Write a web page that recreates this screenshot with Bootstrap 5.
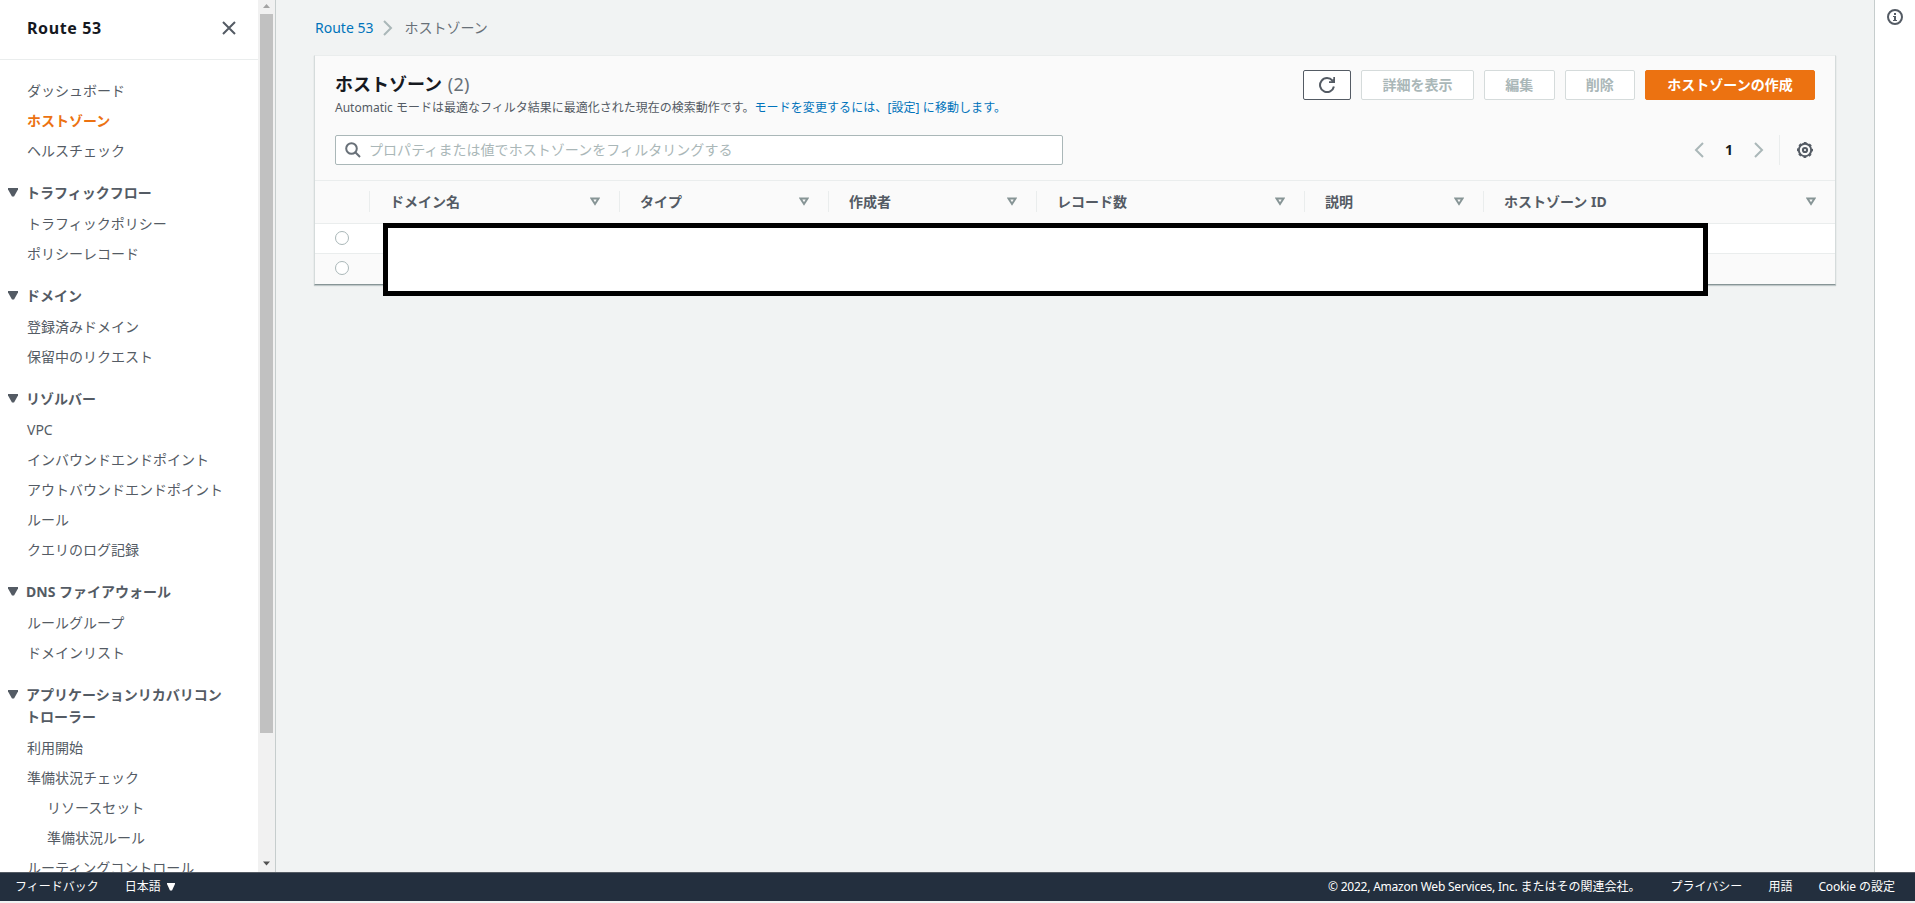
<!DOCTYPE html>
<html lang="ja">
<head>
<meta charset="utf-8">
<title>Route 53</title>
<link href="https://cdn.jsdelivr.net/npm/bootstrap@5.3.0/dist/css/bootstrap.min.css" rel="stylesheet">
<style>
body{font-family:"Noto Sans","Noto Sans CJK JP",sans-serif;font-size:14px;line-height:22px;color:#545b64;background:#f1f3f3;overflow:hidden}
a{text-decoration:none;color:#0073bb}
svg{display:block;flex:none}
.app-body{height:872px}
.side-panel{width:276px;border-right:1px solid #c6cdcd}
.side-head{height:60px;border-bottom:1px solid #eaeded;padding:0 21px 4px 27px}
.side-title{font-size:16px;font-weight:700;color:#16191f;margin:2px 0 0;letter-spacing:.6px}
.side-links{padding-top:16px}
.side-links a{display:block;height:30px;line-height:30px;padding-left:27px;color:#545b64;white-space:nowrap}
.side-links a.current{color:#ec7211;font-weight:700}
.side-links a.sub-link{padding-left:47px}
.side-group{padding:16px 20px 5px 8px;font-weight:700;line-height:22px}
.side-group svg{margin:6px 8px 0 0}
.scroll-rail{width:17px;background:#f1f1f1;padding:3px 2px 5px}
.scroll-thumb{width:13px;height:719px;background:#c1c1c1;margin-top:5px}
.crumbs{height:55px;padding:17px 0 0 1px}
.crumbs .gray-part{color:#687078}
.main-area{padding:0 38px 0 38px}
.zone-panel{background:#fafafa;border:1px solid #d5dbdb;border-top-color:#eaeded;border-bottom:1px solid #879596;height:230px;box-shadow:0 1px 1px rgba(0,28,36,.2)}
.zone-top{padding:14px 20px 0;height:79px}
.zone-title{font-size:18px;line-height:24px;font-weight:700;color:#16191f;margin:2px 0 0}
.zone-title span{font-weight:400;color:#687078;letter-spacing:.3px;margin-left:1px}
.zone-desc{font-size:12px;line-height:18px;white-space:nowrap;margin-top:3px}
.zone-desc a{letter-spacing:.08px}
.tools{gap:10px}
.tool-btn{height:30px;padding:0;border:1px solid #d5dbdb;border-radius:2px;background:#fff;color:#aab7b8;font-size:14px;line-height:26px;font-weight:700;white-space:nowrap;width:70.5px}
.tool-btn.refresh{border-color:#545b64;padding:0 15px;width:48px}
.tool-btn.detail{width:113px}
.tool-btn.primary{background:#ec7211;border-color:#ec7211;color:#fff;width:170px}
.filter-row{padding:0 20px;height:45px;align-items:flex-start}
.filter-box{width:728px;height:30px;border:1px solid #aab7b8;border-radius:2px;background:#fff;padding-left:9px;color:#aab7b8;line-height:28px;letter-spacing:.05px}
.pager{height:30px;color:#16191f;font-weight:700}
.pager .page-no{margin:0 21px}
.pager .rule{width:1px;height:30px;background:#eaeded;margin:0 17px 0 15px}
.zone-table{table-layout:fixed;width:100%;border-collapse:separate;border-spacing:0}
.zone-table th{height:44px;padding:0 0 1px;border-top:1px solid #eaeded;border-bottom:1px solid #eaeded;font-weight:700;line-height:22px}
.zone-table th>div{height:21px;line-height:20px;padding:0 20px 0 20px;border-left:1px solid #eaeded;margin-left:-1px;white-space:nowrap}
.zone-table th:last-child>div{padding-right:19px}
.zone-table td{height:30px;padding:0 0 1px 20px;background:#fff;border-bottom:1px solid #eaeded}
.zone-table tr:last-child td{background:#fafafa;border-bottom:0;padding-bottom:2px}
.form-check-input.pick{display:block;width:14px;height:14px;margin:0;border-color:#aab7b8;background:#fff}
.redacted{left:68px;top:167px;width:1325px;height:73px;border:5px solid #000;background:#fff}
.help-rail{width:41px;border-left:1px solid #c6cdcd;padding:9px 0 0 12px}
.foot{height:29px;background:#232f3e;border-top:1px solid #545b64;color:#fff;font-size:12px;line-height:28px;padding:0 20px 0 15px}
.foot a{color:#fff}
.foot .legal{gap:26px}
.foot .en-copy{letter-spacing:-.22px}
.foot .en-cookie{letter-spacing:-.15px}
</style>
</head>
<body>
<div class="app-body d-flex">
  <aside class="side-panel d-flex bg-white flex-shrink-0">
    <div class="flex-grow-1 overflow-hidden">
      <div class="side-head d-flex align-items-center justify-content-between">
        <h2 class="side-title">Route 53</h2>
        <svg width="16" height="16" viewBox="0 0 16 16" stroke="#545b64" stroke-width="2"><path d="M2 2l12 12M14 2L2 14"/></svg>
      </div>
      <nav class="side-links">
        <a href="#">ダッシュボード</a>
        <a href="#" class="current">ホストゾーン</a>
        <a href="#">ヘルスチェック</a>
        <div class="side-group d-flex"><svg width="10" height="9"><path d="M0 0h10v1.500L6 8.500H4L0 1.500z" fill="#545b64"/></svg>トラフィックフロー</div>
        <a href="#">トラフィックポリシー</a>
        <a href="#">ポリシーレコード</a>
        <div class="side-group d-flex"><svg width="10" height="9"><path d="M0 0h10v1.500L6 8.500H4L0 1.500z" fill="#545b64"/></svg>ドメイン</div>
        <a href="#">登録済みドメイン</a>
        <a href="#">保留中のリクエスト</a>
        <div class="side-group d-flex"><svg width="10" height="9"><path d="M0 0h10v1.500L6 8.500H4L0 1.500z" fill="#545b64"/></svg>リゾルバー</div>
        <a href="#">VPC</a>
        <a href="#">インバウンドエンドポイント</a>
        <a href="#">アウトバウンドエンドポイント</a>
        <a href="#">ルール</a>
        <a href="#">クエリのログ記録</a>
        <div class="side-group d-flex"><svg width="10" height="9"><path d="M0 0h10v1.500L6 8.500H4L0 1.500z" fill="#545b64"/></svg>DNS ファイアウォール</div>
        <a href="#">ルールグループ</a>
        <a href="#">ドメインリスト</a>
        <div class="side-group d-flex"><svg width="10" height="9"><path d="M0 0h10v1.500L6 8.500H4L0 1.500z" fill="#545b64"/></svg><span>アプリケーションリカバリコン<br>トローラー</span></div>
        <a href="#">利用開始</a>
        <a href="#">準備状況チェック</a>
        <a href="#" class="sub-link">リソースセット</a>
        <a href="#" class="sub-link">準備状況ルール</a>
        <a href="#">ルーティングコントロール</a>
      </nav>
    </div>
    <div class="scroll-rail d-flex flex-column flex-shrink-0">
      <svg width="13" height="6"><path d="M3 5L6.500 1L10 5z" fill="#a3a3a3"/></svg>
      <div class="scroll-thumb"></div>
      <svg class="mt-auto" width="13" height="7"><path d="M3 1.500h7L6.500 5.500z" fill="#505050"/></svg>
    </div>
  </aside>

  <main class="main-area flex-grow-1">
    <nav class="crumbs d-flex">
      <a href="#">Route 53</a>
      <svg width="10" height="16" viewBox="0 0 10 16" style="margin:3px 11px 0 10px" fill="none" stroke="#aab7b8" stroke-width="2"><path d="M1 1l7 7-7 7"/></svg>
      <span class="gray-part">ホストゾーン</span>
    </nav>
    <section class="zone-panel position-relative">
      <div class="zone-top d-flex justify-content-between">
        <div>
          <h1 class="zone-title">ホストゾーン <span>(2)</span></h1>
          <div class="zone-desc">Automatic モードは最適なフィルタ結果に最適化された現在の検索動作です。<a href="#">モードを変更するには、[設定] に移動します。</a></div>
        </div>
        <div class="tools d-flex">
          <button class="tool-btn refresh"><svg width="16" height="16" viewBox="0 0 16 16" fill="none" stroke="#545b64" stroke-width="2"><path d="M14.900 9.500A7 7 0 1 1 13.500 3.700"/><path d="M16 0v6h-6V4.300h2.500L14.300 2V0z" fill="#545b64" stroke="none"/></svg></button>
          <button class="tool-btn detail">詳細を表示</button>
          <button class="tool-btn">編集</button>
          <button class="tool-btn">削除</button>
          <button class="tool-btn primary">ホストゾーンの作成</button>
        </div>
      </div>
      <div class="filter-row d-flex justify-content-between">
        <div class="filter-box d-flex align-items-center">
          <svg class="me-2" width="16" height="16" viewBox="0 0 16 16" fill="none" stroke="#687078" stroke-width="2"><circle cx="6.500" cy="6.500" r="5.300"/><path d="M10.300 10.300L15 15"/></svg>
          <span>プロパティまたは値でホストゾーンをフィルタリングする</span>
        </div>
        <div class="pager d-flex align-items-center">
          <svg width="10" height="16" viewBox="0 0 10 16" fill="none" stroke="#aab7b8" stroke-width="2"><path d="M9 1L2 8l7 7"/></svg>
          <span class="page-no">1</span>
          <svg width="10" height="16" viewBox="0 0 10 16" fill="none" stroke="#aab7b8" stroke-width="2"><path d="M1 1l7 7-7 7"/></svg>
          <span class="rule"></span>
          <svg width="16" height="16" viewBox="0 0 16 16" fill="none" stroke="#545b64" style="margin-right:2px"><circle cx="8" cy="8" r="6.200" stroke-width="2"/><circle cx="8" cy="8" r="7.300" stroke-width="1.400" stroke-dasharray="2.870 2.863" stroke-dashoffset="1.430"/><circle cx="8" cy="8" r="2.100" stroke-width="2"/></svg>
        </div>
      </div>
      <table class="zone-table">
        <colgroup><col style="width:55px"><col style="width:250px"><col style="width:209px"><col style="width:208px"><col style="width:268px"><col style="width:179px"><col></colgroup>
        <thead><tr>
          <th></th>
          <th><div class="d-flex justify-content-between align-items-center">ドメイン名<svg width="10" height="9"><path d="M1.500 1.500h7L5 7z" fill="none" stroke="#879596" stroke-width="2"/></svg></div></th>
          <th><div class="d-flex justify-content-between align-items-center">タイプ<svg width="10" height="9"><path d="M1.500 1.500h7L5 7z" fill="none" stroke="#879596" stroke-width="2"/></svg></div></th>
          <th><div class="d-flex justify-content-between align-items-center">作成者<svg width="10" height="9"><path d="M1.500 1.500h7L5 7z" fill="none" stroke="#879596" stroke-width="2"/></svg></div></th>
          <th><div class="d-flex justify-content-between align-items-center">レコード数<svg width="10" height="9"><path d="M1.500 1.500h7L5 7z" fill="none" stroke="#879596" stroke-width="2"/></svg></div></th>
          <th><div class="d-flex justify-content-between align-items-center">説明<svg width="10" height="9"><path d="M1.500 1.500h7L5 7z" fill="none" stroke="#879596" stroke-width="2"/></svg></div></th>
          <th><div class="d-flex justify-content-between align-items-center">ホストゾーン ID<svg width="10" height="9"><path d="M1.500 1.500h7L5 7z" fill="none" stroke="#879596" stroke-width="2"/></svg></div></th>
        </tr></thead>
        <tbody>
          <tr><td colspan="7"><input class="form-check-input pick" type="radio" name="zone"></td></tr>
          <tr><td colspan="7"><input class="form-check-input pick" type="radio" name="zone"></td></tr>
        </tbody>
      </table>
      <div class="redacted position-absolute"></div>
    </section>
  </main>

  <aside class="help-rail bg-white flex-shrink-0">
    <svg width="16" height="16" viewBox="0 0 16 16"><circle cx="8" cy="8" r="7" fill="none" stroke="#545b64" stroke-width="2"/><path d="M7 4h2v2H7zM6 7h3v4h1v1H6v-1h1V8H6z" fill="#545b64"/></svg>
  </aside>
</div>
<footer class="foot d-flex justify-content-between">
  <div class="d-flex">
    <a href="#" style="margin-right:26px">フィードバック</a>
    <a href="#" class="d-flex align-items-center">日本語<svg width="8" height="8" style="margin-left:6px"><path d="M0 0h8v1L5 7.500H3L0 1z" fill="#fff"/></svg></a>
  </div>
  <div class="legal d-flex">
    <span class="me-1"><span class="en-copy">© 2022, Amazon Web Services, Inc.</span> またはその関連会社。</span>
    <a href="#">プライバシー</a>
    <a href="#">用語</a>
    <a href="#"><span class="en-cookie">Cookie</span> の設定</a>
  </div>
</footer>
<script src="https://cdn.jsdelivr.net/npm/bootstrap@5.3.0/dist/js/bootstrap.bundle.min.js"></script>
</body>
</html>
